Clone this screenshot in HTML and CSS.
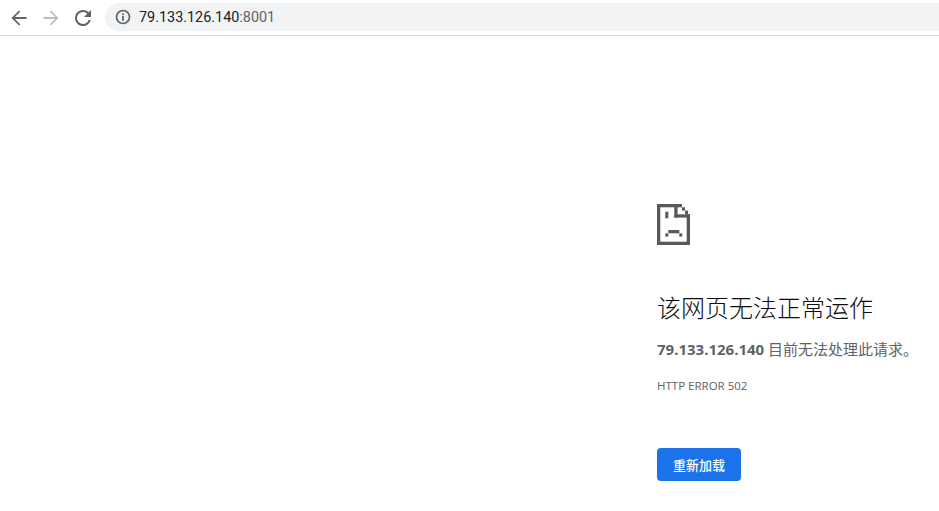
FILE: index.html
```html
<!DOCTYPE html>
<html lang="zh-CN">
<head>
<meta charset="utf-8">
<title>79.133.126.140</title>
<link rel="stylesheet" href="styles.css">
</head>
<body>
<header class="toolbar">
  <svg class="nav-icon nav-back" viewBox="0 0 16 16"><path d="M15.5 7H3.9l5.3-5.3L8 .5.5 8 8 15.500l1.200-1.200L3.900 9h11.600z" fill="#5f6368"/></svg>
  <svg class="nav-icon nav-forward" viewBox="0 0 16 16"><path d="M.5 7h11.600L6.800 1.700 8 .5 15.500 8 8 15.500l-1.200-1.200L12.100 9H.5z" fill="#bcbec1"/></svg>
  <svg class="nav-icon nav-reload" viewBox="0 0 16 16"><path d="M13.650 2.350A7.950 7.950 0 0 0 8 0a8 8 0 1 0 7.730 10h-2.080A6 6 0 1 1 8 2c1.660 0 3.140.69 4.220 1.780L9 7h7V0z" fill="#5f6368"/></svg>
  <div class="omnibox">
    <svg class="info-icon" viewBox="0 0 16 16"><circle cx="8" cy="8" r="6.500" fill="none" stroke="#5f6368" stroke-width="1.700"/><rect x="7.100" y="7" width="1.800" height="4.700" fill="#5f6368"/><rect x="7.100" y="4.300" width="1.800" height="1.800" fill="#5f6368"/></svg>
    <span class="host">79.133.126.140</span><span class="port">:8001</span>
  </div>
</header>
<main class="content">
  <svg class="sad-file" viewBox="0 0 33 41" fill="#58595b">
    <rect x="0" y="0" width="3.300" height="41"/>
    <rect x="0" y="0" width="25" height="3.300"/>
    <rect x="0" y="37.700" width="33" height="3.300"/>
    <rect x="29.700" y="10.300" width="3.300" height="30.700"/>
    <rect x="17.300" y="0" width="3.300" height="13.600"/>
    <rect x="17.300" y="10.300" width="15.700" height="3.300"/>
    <rect x="25" y="3.300" width="3" height="3.300"/>
    <rect x="28" y="6.600" width="3" height="3.700"/>
    <rect x="8.300" y="7.700" width="3" height="6.600"/>
    <rect x="11.300" y="26" width="11" height="3.300"/>
    <rect x="8.300" y="29.300" width="3" height="3.300"/>
    <rect x="22.300" y="29.300" width="3" height="3.300"/>
  </svg>
  <h1 class="title">该网页无法正常运作</h1>
  <p class="message"><strong class="message-host">79.133.126.140</strong> 目前无法处理此请求。</p>
  <p class="code">HTTP ERROR 502</p>
  <button class="reload">重新加载</button>
</main>
</body>
</html>
```

FILE: styles.css
```css
html, body {
  margin: 0;
  padding: 0;
  height: 100%;
  overflow: hidden;
  background: #fff;
  font-family: "Open Sans", "Noto Sans CJK SC", sans-serif;
}

.toolbar {
  display: flex;
  align-items: center;
  height: 35px;
  border-bottom: 1px solid #dadce0;
  padding-left: 11px;
  overflow: hidden;
}

.nav-icon {
  width: 16px;
  height: 16px;
  flex: none;
}

.nav-forward { margin-left: 16px; }
.nav-reload { margin-left: 16px; margin-right: 14px; }

.omnibox {
  flex: none;
  display: flex;
  align-items: center;
  box-sizing: border-box;
  width: 900px;
  height: 28px;
  padding: 0 0 0 10px;
  margin-bottom: 1px;
  border-radius: 15px;
  background: #f1f3f4;
  font-family: Roboto, "Noto Sans", sans-serif;
  font-size: 14.4px;
}

.info-icon {
  width: 16px;
  height: 16px;
  margin-right: 8px;
  flex: none;
}

.host { color: #202124; }
.port { color: #5f6368; }

.content {
  padding: 168px 0 0 657px;
}

.sad-file {
  display: block;
  width: 33px;
  height: 41px;
}

.title {
  margin: 46px 0 0;
  font-size: 24px;
  line-height: 34px;
  font-weight: 300;
  color: #0c0c0e;
  white-space: nowrap;
}

.message {
  margin: 14px 0 0;
  font-size: 15px;
  line-height: 20px;
  color: #5f6368;
  white-space: nowrap;
}

.message-host {
  font-weight: 700;
}

.code {
  margin: 17px 0 0;
  font-size: 11.5px;
  line-height: 20px;
  color: #5f6368;
  white-space: nowrap;
}

.reload {
  display: block;
  margin-top: 52px;
  width: 84px;
  height: 33px;
  padding: 0;
  border: 0;
  border-radius: 4px;
  background: #1a73e8;
  color: #fff;
  font-family: "Noto Sans CJK SC", sans-serif;
  font-size: 13px;
  font-weight: 500;
}
```
